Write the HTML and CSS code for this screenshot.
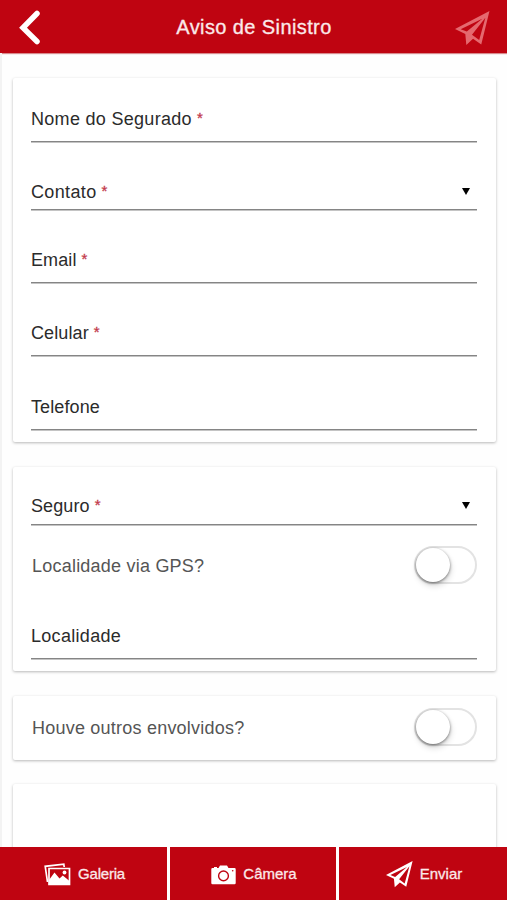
FILE: index.html
```html
<!DOCTYPE html>
<html lang="pt-BR">
<head>
<meta charset="utf-8">
<title>Aviso de Sinistro</title>
<link rel="stylesheet" href="styles.css">
</head>
<body>
<svg class="defs" width="0" height="0">
  <symbol id="plane" viewBox="0 0 34 34">
    <path d="M0 17.500 33.500 0 25.500 32.500 17.500 27 11 33 10 22.300Z M5.500 17.700 11.500 20 26.500 7.500Z M29.500 6.500 16.500 23 23.500 28.200Z" fill-rule="evenodd"/>
  </symbol>
</svg>
<div class="app">
  <header class="header">
    <svg class="back" viewBox="0 0 20 36"><path d="M17.500 3.500 3.500 17.700 17.500 31.500"/></svg>
    <h1 class="title">Aviso de Sinistro</h1>
    <svg class="send"><use href="#plane"/></svg>
  </header>
  <main class="content">
    <section class="card contact">
      <div class="field first"><span class="name">Nome do Segurado</span><span class="req">*</span></div>
      <div class="field select"><span class="name short">Contato</span><span class="req">*</span><i class="arrow"></i></div>
      <div class="field email"><span class="name short">Email</span><span class="req">*</span></div>
      <div class="field"><span class="name short">Celular</span><span class="req">*</span></div>
      <div class="field phone"><span class="name short">Telefone</span></div>
    </section>
    <section class="card insurance">
      <div class="field select policy"><span class="name short">Seguro</span><span class="req">*</span><i class="arrow"></i></div>
      <div class="switch-row"><span class="question">Localidade via GPS?</span><span class="toggle"><i class="knob"></i></span></div>
      <div class="field place"><span class="name">Localidade</span></div>
    </section>
    <section class="card others">
      <div class="switch-row"><span class="question">Houve outros envolvidos?</span><span class="toggle"><i class="knob"></i></span></div>
    </section>
    <section class="card rest"></section>
  </main>
  <footer class="tabs">
    <div class="tab gallery">
      <svg class="icon" viewBox="0 0 27 24" width="27" height="24">
        <path d="M3.500 19 1.200 3.300 19.800 1.200 20.200 4" fill="none" stroke="#fff" stroke-width="1.700"/>
        <path d="M5 5.500H25.500V21.500H5Z" fill="none" stroke="#fff" stroke-width="1.700"/>
        <path d="M5 21.500V17L10.500 9.500 15.500 15.500 18.800 12.500 25.500 18V21.500Z" fill="#fff"/>
        <circle cx="20.500" cy="9.500" r="1.900" fill="#fff"/>
      </svg>
      <span>Galeria</span>
    </div>
    <div class="tab camera">
      <svg class="icon" viewBox="0 0 25 20" width="25" height="20">
        <path d="M1.500 3H3V2H6V3H7.500L9 .5H16L17.500 3H23.500Q24.700 3 24.700 4.200V18Q24.700 19.300 23.500 19.300H1.500Q.3 19.300 .3 18V4.200Q.3 3 1.500 3Z" fill="#fff"/>
        <circle cx="12.500" cy="10.900" r="4.900" fill="#fff" stroke="#bf0411" stroke-width="1.400"/>
        <circle cx="21.700" cy="5.700" r=".8" fill="#bf0411"/>
      </svg>
      <span>Câmera</span>
    </div>
    <div class="tab submit">
      <svg class="icon plane"><use href="#plane"/></svg>
      <span>Enviar</span>
    </div>
  </footer>
</div>
</body>
</html>
```
FILE: styles.css
```css
* { box-sizing: border-box; }
body {
  margin: 0;
  background: #fefefe;
  color: #2b2b2b;
  font: 18px/20px "Liberation Sans", Arial, sans-serif;
}
.defs { display: none; }
.app { display: flex; flex-direction: column; height: 900px; overflow: hidden; }
.header {
  flex: none;
  display: flex;
  align-items: center;
  justify-content: space-between;
  height: 53px;
  padding: 0 17px 0 19px;
  background: #bf0411;
  box-shadow: 0 1px 1px #d88a8d;
}
.back { width: 21px; height: 36px; margin-top: 2px; fill: none; stroke: #fff; stroke-width: 5.5; stroke-linecap: round; }
.title { margin: 0 0 0 13px; font-size: 20px; font-weight: 400; line-height: 24px; color: #fbe9e9; -webkit-text-stroke: .3px; letter-spacing: .4px; }
.send { width: 35px; height: 35px; margin-top: 3px; fill: #e5696f; }
.content {
  flex: 1;
  min-height: 0;
  display: flex;
  flex-direction: column;
  padding: 25px 11px 0;
  border-left: 2px solid #f3f3f3;
  overflow: hidden;
}
.card {
  flex: none;
  width: 483px;
  padding: 0 19px 0 18px;
  background: #fff;
  border-radius: 2px;
  box-shadow: 0 1px 3px rgba(0, 0, 0, .28);
}
.contact { height: 364px; margin-bottom: 25px; }
.insurance { height: 204px; margin-bottom: 25px; }
.others { height: 64px; margin-bottom: 24px; padding-top: 12px; }
.rest { height: 120px; }
.field {
  display: flex;
  align-items: flex-end;
  height: 73px;
  padding-bottom: 12px;
  border-bottom: 1px solid #858585;
  box-shadow: 0 1px 0 #c4c4c4;
}
.first { height: 64px; }
.select { height: 68px; padding-bottom: 7px; }
.phone { height: 74px; }
.policy { height: 58px; padding-bottom: 8px; }
.place { height: 75px; padding-bottom: 12px; }
.name { letter-spacing: .3px; }
.short { letter-spacing: .1px; }
.contact .select .name { letter-spacing: .35px; }
.req { margin: 0 0 1px 5px; font-size: 15px; color: #c33a4c; -webkit-text-stroke: .3px; }
.arrow {
  margin: 0 7px 7px auto;
  border: solid transparent;
  border-width: 7px 4px 0;
  border-top-color: #000;
}
.switch-row {
  display: flex;
  align-items: center;
  justify-content: space-between;
  height: 38px;
  margin: 0 0 0 1px;
  color: #555;
}
.question { padding-top: 2px; letter-spacing: .22px; }
.insurance .switch-row { margin-top: 21px; }
.toggle {
  display: flex;
  align-items: center;
  width: 63px;
  height: 38px;
  border: 2px solid #e3e3e3;
  border-radius: 19px;
}
.knob {
  width: 34px;
  height: 34px;
  border-radius: 50%;
  background: #fff;
  box-shadow: 0 1px 3px rgba(0, 0, 0, .5), 1px 4px 6px rgba(0, 0, 0, .14);
}
.tabs {
  flex: none;
  display: grid;
  grid-template-columns: 167px 166px 1fr;
  gap: 3px;
  height: 53px;
  background: #fff;
}
.tab {
  display: flex;
  align-items: center;
  justify-content: center;
  gap: 7px;
  padding: 2px 0 0 2px;
  background: #bf0411;
  color: #fbe9e9;
  font-size: 15px;
  line-height: 18px;
  -webkit-text-stroke: .3px;
}
.tab span { margin-top: -1px; }
.gallery span { letter-spacing: -.2px; }
.plane { width: 27px; height: 27px; fill: #fff; }
```
